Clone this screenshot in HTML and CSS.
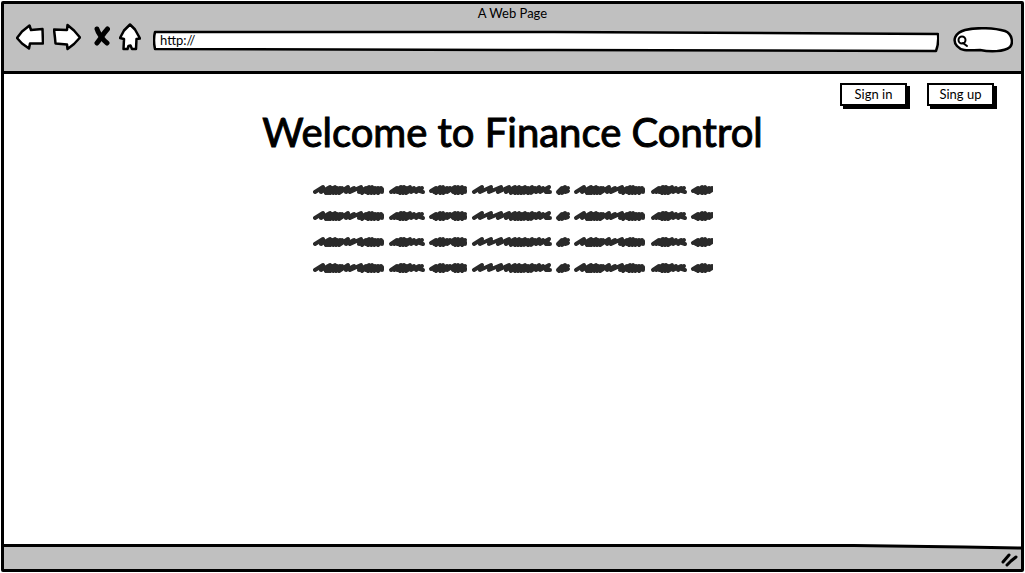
FILE: index.html
```html
<!DOCTYPE html>
<html lang="en">
<head>
<meta charset="utf-8">
<title>A Web Page</title>
<link rel="stylesheet" href="styles.css">
</head>
<body>
<div class="frame">
  <header class="chrome">
    <div class="window-title">A Web Page</div>
    <div class="toolbar">
      <button class="tool back" type="button" aria-label="Back">
        <svg width="28" height="28" viewBox="0 0 28 28"><path class="shape" d="M1 15 6 8.500 13.500 2.500 15 7 26.500 6 27 20.500 14 20.500 13 25.500 6 20.500Z"/></svg>
      </button>
      <button class="tool forward" type="button" aria-label="Forward">
        <svg width="28" height="28" viewBox="0 0 28 28"><path class="shape" d="M1 6.500 14 7 14.500 2 21 7.500 27 14.500 21 21 14.500 26 14 21.500 2.500 20.500 2 15Z"/></svg>
      </button>
      <button class="tool stop" type="button" aria-label="Stop">
        <svg width="16" height="28" viewBox="0 0 16 28"><path class="cross" d="M3 6C4 10 9 17 13 20M13.500 6C9 11 7 15 3 20"/></svg>
      </button>
      <button class="tool home" type="button" aria-label="Home">
        <svg width="22" height="28" viewBox="0 0 22 28"><path class="shape" d="M11 1.500 16 6.500 21 15.500 17.500 16 17 26 13 26 11.500 22.500 9.500 23 8.500 26 4.500 26 5 16 1 15 5 7.500Z"/></svg>
      </button>
      <label class="address">
        <svg class="outline" viewBox="0 0 784 24" preserveAspectRatio="none" aria-hidden="true"><path class="shape" d="M2 3 400 3 783 5Q784 14 781 22L400 21 2 20Q0 11 2 3Z"/></svg>
        <input type="text" value="http://" aria-label="Address">
      </label>
      <label class="search">
        <svg class="outline" viewBox="0 0 60 26" aria-hidden="true"><path class="shape" d="M12 3C24 0 42 1 52 4C60 7 60 17 57 20C51 25 37 25 27 23C17 23 9 25 4 19C-1 13 2 6 12 3Z"/><circle class="lens" cx="9" cy="13" r="3.500"/><path class="lens" d="m10 16 4 3"/></svg>
        <input type="search" aria-label="Search">
      </label>
    </div>
  </header>
  <main>
    <nav class="account">
      <button class="action" type="button">Sign in</button>
      <button class="action" type="button">Sing up</button>
    </nav>
    <h1>Welcome to Finance Control</h1>
    <div class="copy" aria-hidden="true">
      <svg width="400" height="12" viewBox="0 0 400 12">
        <defs>
          <g id="long"><path d="M2 8 10 3 8 8 17 3 13 9 19 4 15 9 22 3 17 9 24 4 20 9 27 4 23 9 29 4 26 9 35 3 33 8 41 4 37 8 48 3 46 8 53 4 49 9 56 3 53 8 59 3 55 9 62 4 58 9 65 4 61 9 68 4 65 9 69 5 69 8"/></g>
          <g id="medium"><path d="M2 8 8 4 5 8 12 3 8 8 15 3 11 9 18 4 14 9 21 3 17 9 25 4 22 8 30 4 27 8 33 4 31 7 34 8"/></g>
          <g id="thick"><path d="M2 7 7 4 5 8 11 3 7 9 14 3 11 9 18 4 14 9 21 4 18 8 26 3 24 8 29 3 26 9 33 3 29 9 36 4 33 9 36 6 36 8"/></g>
          <g id="line">
            <use href="#long"/><use href="#medium" x="76"/><use href="#thick" x="116"/>
            <path d="M161 8 169 3 167 8 178 3 176 8 188 3 185 8 196 3 193 8 202 3 198 9 206 3 202 9 209 4 205 9 212 3 208 9 215 4 211 9 219 3 215 9 222 4 218 9 226 3 223 8 230 4 227 8 236 3 233 8 237 8"/>
            <path d="M245 8 249 4 246 9 252 3 249 9 255 4 252 8 255 7"/>
            <use href="#long" x="261"/><use href="#medium" x="338"/><use href="#thick" x="378"/>
          </g>
        </defs>
        <use href="#line"/>
      </svg>
      <svg width="400" height="12" viewBox="0 0 400 12"><use href="#line"/></svg>
      <svg width="400" height="12" viewBox="0 0 400 12"><use href="#line"/></svg>
      <svg width="400" height="12" viewBox="0 0 400 12"><use href="#line"/></svg>
    </div>
  </main>
  <footer class="status">
    <svg class="edge" viewBox="0 0 1017 25" preserveAspectRatio="none" aria-hidden="true"><path class="shade" d="M0 1 850 1 960 3 1017 4V25H0Z"/><path class="rule" d="M0 1.500H850L960 3 1017 4"/></svg>
    <svg class="grip" width="18" height="14" viewBox="0 0 18 14" aria-hidden="true"><path d="M2 9 8 2M6 12 10 8 15 4"/></svg>
  </footer>
</div>
</body>
</html>
```
FILE: styles.css
```css
* { box-sizing: border-box; }
body {
  margin: 0;
  padding: 1px;
  min-height: 100vh;
  display: flex;
  background: #fff;
  color: #000;
  font: 13px/18px Lato, "Liberation Sans", sans-serif;
}
.frame {
  flex: 1;
  display: flex;
  flex-direction: column;
  border: 3px solid #000;
  border-radius: 2px;
}
.chrome {
  padding-bottom: 18px;
  border-bottom: 3px solid #000;
  background: #c0c0c0;
}
.window-title { text-align: center; }
.toolbar {
  display: flex;
  align-items: flex-start;
  padding: 1px 8px 0 12px;
}
svg {
  display: block;
  fill: none;
  stroke: #000;
  stroke-linecap: round;
  stroke-linejoin: round;
}
.shape {
  fill: #fff;
  stroke-width: 2.5;
  vector-effect: non-scaling-stroke;
}
.cross { stroke-width: 5px; }
.lens { stroke-width: 2px; }
button {
  font: inherit;
  color: inherit;
  cursor: pointer;
}
.tool {
  flex: none;
  padding: 0;
  border: 0;
  background: none;
}
.forward { margin-left: 9px; }
.stop { margin-left: 13px; }
.home { margin-left: 9px; }
.address {
  position: relative;
  flex: 1;
  height: 24px;
  margin: 6px 14px 0 12px;
}
.search {
  position: relative;
  flex: none;
  width: 60px;
  height: 26px;
  margin-top: 4px;
}
.outline {
  position: absolute;
  inset: 0;
  width: 100%;
  height: 100%;
}
input {
  position: relative;
  display: block;
  width: 100%;
  height: 100%;
  padding: 0 7px 2px;
  border: 0;
  outline: 0;
  background: none;
  font: inherit;
  color: inherit;
  appearance: none;
}
.search input { padding-left: 18px; }
main {
  flex: 1;
  display: flex;
  flex-direction: column;
  align-items: center;
}
.account {
  align-self: flex-end;
  display: flex;
  gap: 20px;
  padding: 9px 27px 0 0;
}
.action {
  min-width: 67px;
  padding: 0 8px 1px;
  border: 2px solid #000;
  background: #fff;
  box-shadow: 3px 3px 0 #000;
}
h1 {
  margin: 0;
  font-size: 40px;
  line-height: 52px;
  font-weight: 400;
  -webkit-text-stroke: 1px #000;
}
.copy {
  display: grid;
  gap: 14px;
  margin-top: 26px;
}
.copy svg {
  stroke: #2a2a2a;
  stroke-width: 4px;
}
.status {
  position: relative;
  height: 25px;
  display: flex;
  justify-content: flex-end;
  align-items: center;
  padding: 6px 2px 0;
}
.edge {
  position: absolute;
  inset: 0;
  width: 100%;
  height: 100%;
}
.shade {
  fill: #c0c0c0;
  stroke: none;
}
.rule { stroke-width: 3px; }
.grip {
  position: relative;
  stroke-width: 3px;
}
```
